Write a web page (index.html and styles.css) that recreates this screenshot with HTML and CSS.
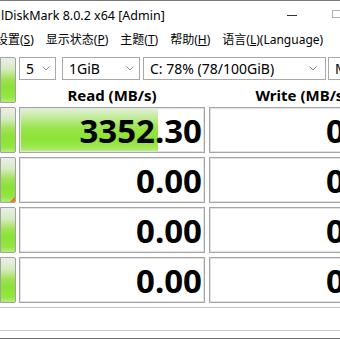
FILE: index.html
```html
<!DOCTYPE html>
<html>
<head>
    <meta charset="UTF-8">
    <title>CrystalDiskMark 8.0.2 x64 [Admin]</title>
    <link rel="stylesheet" href="styles.css">
</head>
<body>
    <div class="window">
        <!-- title bar -->
        <div class="titlebar">
            <span class="title">lDiskMark 8.0.2 x64 [Admin]</span>
            <span class="winbtn min"></span>
            <span class="winbtn max"></span>
        </div>

        <!-- menu -->
        <div class="menubar">
            <span class="menu first">设置(<u>S</u>)</span>
            <span class="menu">显示状态(<u>P</u>)</span>
            <span class="menu">主题(<u>T</u>)</span>
            <span class="menu">帮助(<u>H</u>)</span>
            <span class="menu">语言(<u>L</u>)(Language)</span>
        </div>

        <div class="board">
            <button class="runbtn"></button>
            <div class="topbar">
                <div class="selects">
                    <div class="select count"><span>5</span>
                        <svg width="8" height="5" viewBox="0 0 8 5"><path d="M0.5 0.5 L4 4 L7.5 0.5" fill="none" stroke="#8a8a8a"/></svg>
                    </div>
                    <div class="select size"><span>1GiB</span>
                        <svg width="8" height="5" viewBox="0 0 8 5"><path d="M0.5 0.5 L4 4 L7.5 0.5" fill="none" stroke="#8a8a8a"/></svg>
                    </div>
                    <div class="select drive"><span>C: 78% (78/100GiB)</span>
                        <svg width="8" height="5" viewBox="0 0 8 5"><path d="M0.5 0.5 L4 4 L7.5 0.5" fill="none" stroke="#8a8a8a"/></svg>
                    </div>
                    <div class="select unit"><span>MB/s</span></div>
                </div>
                <div class="heads">
                    <div>Read (MB/s)</div>
                    <div>Write (MB/s)</div>
                </div>
            </div>

            <!-- row 1 -->
            <button class="runbtn"></button>
            <div class="cell meter" style="background-size: 75% 100%, auto;">3352.30</div>
            <div class="cell">0.00</div>

            <!-- row 2 -->
            <button class="runbtn flagged"></button>
            <div class="cell">0.00</div>
            <div class="cell">0.00</div>

            <!-- row 3 -->
            <button class="runbtn"></button>
            <div class="cell">0.00</div>
            <div class="cell">0.00</div>

            <!-- row 4 -->
            <button class="runbtn"></button>
            <div class="cell">0.00</div>
            <div class="cell">0.00</div>
        </div>

        <div class="comment"></div>
    </div>
</body>
</html>
```

FILE: styles.css
```css
/* Global */
* {
    margin: 0;
    padding: 0;
    box-sizing: border-box;
}

body {
    width: 340px;
    height: 340px;
    overflow: hidden;
    background: #fff;
    color: #000;
    font-family: "Noto Sans", "Noto Sans CJK SC", sans-serif;
}

.window {
    height: 339px;
    overflow: hidden;
    border-top: 1px solid #7a7a7a;
    border-bottom: 1px solid #707070;
}

/* Title bar */
.titlebar {
    height: 26px;
    display: flex;
    align-items: center;
    font-size: 12.5px;
}

.titlebar .title {
    padding-left: 1px;
    padding-top: 2px;
    white-space: nowrap;
}

.winbtn.min {
    margin-left: auto;
    margin-top: 2px;
    width: 10px;
    height: 1px;
    background: #333;
}

.winbtn.max {
    width: 11px;
    height: 8px;
    margin-left: 35px;
    margin-right: -3px;
    border: 1px solid #b0b0b0;
}

/* Menu */
.menubar {
    height: 24px;
    display: flex;
    align-items: center;
    font-size: 12px;
    white-space: nowrap;
}

.menu {
    padding: 0 6px;
}

.menu.first {
    margin-left: -10px;
}

/* Main board */
.board {
    display: grid;
    grid-template-columns: 15px 186px 186px;
    grid-auto-rows: 46px;
    column-gap: 4px;
    row-gap: 4px;
    padding-top: 6px;
}

.runbtn {
    width: 16px;
    border: 1px solid #a2a2a2;
    border-radius: 0 2px 2px 0;
    background: linear-gradient(to bottom, #eceeea 0%, #d6ebc0 25%, #a2e25a 47%, #8be234 65%, #93e640 88%, #b4ee7c 100%);
}

.runbtn.flagged {
    background: linear-gradient(to top left, #f47a1f 50%, transparent 50%) right bottom / 6px 6px no-repeat,
                linear-gradient(to bottom, #eceeea 0%, #d6ebc0 25%, #a2e25a 47%, #8be234 65%, #93e640 88%, #b4ee7c 100%);
}

.topbar {
    grid-column: 2 / 4;
    display: flex;
    flex-direction: column;
}

.selects {
    display: flex;
    height: 23px;
    font-size: 14px;
}

.select {
    display: flex;
    align-items: center;
    justify-content: space-between;
    padding: 0 5px 0 6px;
    border: 1px solid #a8a8a8;
    background: #fff;
    white-space: nowrap;
}

.select.count {
    width: 37px;
}

.select.size {
    width: 78px;
    margin-left: 6px;
}

.select.drive {
    width: 183px;
    margin-left: 3px;
    padding-right: 8px;
}

.select.unit {
    width: 60px;
    margin-left: 2px;
}

.heads {
    display: grid;
    grid-template-columns: 186px 186px;
    column-gap: 4px;
    height: 23px;
    align-items: end;
    font-size: 15px;
    font-weight: 700;
    line-height: 15px;
    text-align: center;
    white-space: nowrap;
}

.cell {
    display: flex;
    align-items: center;
    justify-content: flex-end;
    padding-right: 2px;
    border: 1px solid #a4a4a4;
    box-shadow: inset 0 0 0 1px #e2e2e2;
    background: #fff;
    font-size: 33px;
    font-weight: 700;
    white-space: nowrap;
}

.cell.meter {
    background: linear-gradient(to bottom, #e4f2d8 0%, #c4eba0 20%, #9ae44c 45%, #8de236 70%, #9ee852 90%, #c0f090 100%) left top no-repeat, #fff;
}

.comment {
    height: 24px;
    margin-top: 4px;
    border-top: 1px solid #c6c6c6;
    border-bottom: 1px solid #c6c6c6;
}
```
